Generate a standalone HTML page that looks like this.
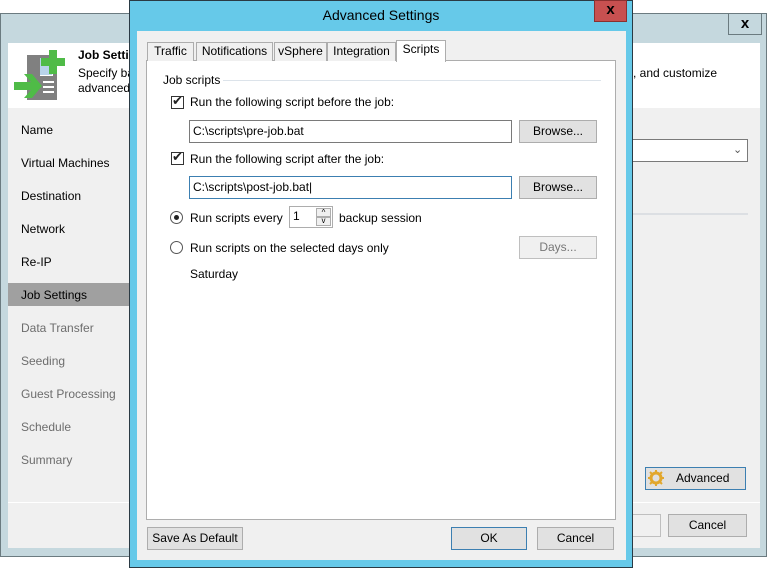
<!DOCTYPE html>
<html><head><style>
*{box-sizing:border-box;margin:0;padding:0}
body{width:768px;height:568px;background:#fff;position:relative;overflow:hidden;font-family:"Liberation Sans","DejaVu Sans",sans-serif;font-size:12px;color:#000}
.a{position:absolute}
.btn{position:absolute;background:#e1e1e1;border:1px solid #adadad;text-align:center;line-height:20px;font-size:12px}
.nav{position:absolute;left:21px;font-size:12px}
.cb{position:absolute;width:13px;height:13px;border:1px solid #333;background:#fff}
.tb{position:absolute;background:#fff;border:1px solid #7a7a7a;padding-left:3px;line-height:20px}
.tab{position:absolute;top:42px;height:19px;border:1px solid #adadad;border-bottom:none;background:#f0f0f0;line-height:17px;text-align:center;font-size:12px}
.rad{position:absolute;width:13px;height:13px;border:1px solid #555;border-radius:50%;background:#fff}
</style></head><body>
<!-- background window -->
<div class="a" style="left:0;top:13px;width:767px;height:544px;background:#c5d8de;border:1px solid #6b7b80"></div>
<div class="a" style="left:728px;top:13px;width:34px;height:22px;border:1px solid #6b7b80;background:#c5d8de;text-align:center;font-weight:bold;font-size:15px;line-height:20px">x</div>
<div class="a" style="left:8px;top:43px;width:752px;height:505px;background:#f0f0f0"></div>
<div class="a" style="left:8px;top:43px;width:752px;height:65px;background:#fff"></div>
<svg class="a" style="left:12px;top:48px" width="56" height="56" viewBox="0 0 56 56">
<rect x="15" y="7" width="30" height="45" fill="#808080"/>
<rect x="28" y="10" width="13" height="18" fill="#fff"/>
<rect x="28" y="10" width="12" height="17" fill="#b8d3ea"/>
<rect x="31" y="33" width="11" height="2" fill="#fff"/><rect x="31" y="38" width="11" height="2" fill="#fff"/><rect x="31" y="43" width="11" height="2" fill="#fff"/>
<path d="M37 2h8v8h8v8h-8v8h-8v-8h-8v-8h8z" fill="#4fbb47"/>
<path d="M2 34h17l-7-8h8l10 12-10 12h-8l7-8H2z" fill="#4fbb47"/>
</svg>
<div class="a" style="left:78px;top:48px;font-weight:bold">Job Settings</div>
<div class="a" style="left:78px;top:66px;line-height:15px">Specify basic<br>advanced</div>
<div class="a" style="left:633px;top:66px">, and customize</div>
<div class="nav" style="top:123px">Name</div>
<div class="nav" style="top:156px">Virtual Machines</div>
<div class="nav" style="top:189px">Destination</div>
<div class="nav" style="top:222px">Network</div>
<div class="nav" style="top:255px">Re-IP</div>
<div class="a" style="left:8px;top:283px;width:124px;height:23px;background:#a0a0a0"></div>
<div class="nav" style="top:288px">Job Settings</div>
<div class="nav" style="top:321px;color:#6d6d6d">Data Transfer</div>
<div class="nav" style="top:354px;color:#6d6d6d">Seeding</div>
<div class="nav" style="top:387px;color:#6d6d6d">Guest Processing</div>
<div class="nav" style="top:420px;color:#6d6d6d">Schedule</div>
<div class="nav" style="top:453px;color:#6d6d6d">Summary</div>
<div class="a" style="left:8px;top:502px;width:752px;height:1px;background:#fff"></div>
<div class="a" style="left:630px;top:139px;width:118px;height:23px;background:#fff;border:1px solid #7a7a7a"></div>
<div class="a" style="left:733px;top:143px;color:#555;font-size:11px">⌄</div>
<div class="a" style="left:633px;top:213px;width:115px;height:2px;background:#dcdfe3"></div>
<div class="btn" style="left:645px;top:467px;width:101px;height:23px;border-color:#3c7fb1;text-align:left;padding-left:30px">Advanced</div>
<svg class="a" style="left:648px;top:470px" width="16" height="16" viewBox="0 0 16 16"><circle cx="8" cy="8" r="5" fill="none" stroke="#e2a72c" stroke-width="3"/><path d="M8 0v3M8 13v3M0 8h3M13 8h3M2 2l2 2M12 12l2 2M2 14l2-2M12 4l2-2" stroke="#e2a72c" stroke-width="2"/></svg>
<div class="btn" style="left:620px;top:514px;width:41px;height:23px;background:#f0f0f0;border-color:#bfbfbf"></div>
<div class="btn" style="left:668px;top:514px;width:79px;height:23px">Cancel</div>

<!-- front dialog -->
<div class="a" style="left:129px;top:0;width:504px;height:568px;background:#66c9e9;border:1px solid #2a3a44"></div>
<div class="a" style="left:129px;top:7px;width:504px;text-align:center;font-size:14px">Advanced Settings</div>
<div class="a" style="left:594px;top:0;width:33px;height:22px;background:#c75050;border:1px solid #8a3030;text-align:center;font-weight:bold;font-size:15px;line-height:18px">x</div>
<div class="a" style="left:137px;top:31px;width:489px;height:529px;background:#f0f0f0"></div>
<div class="a" style="left:146px;top:60px;width:470px;height:460px;background:#fff;border:1px solid #adadad"></div>
<div class="tab" style="left:147px;width:47px">Traffic</div>
<div class="tab" style="left:196px;width:77px">Notifications</div>
<div class="tab" style="left:274px;width:53px">vSphere</div>
<div class="tab" style="left:327px;width:69px">Integration</div>
<div class="tab" style="left:396px;top:40px;height:22px;width:50px;background:#fff">Scripts</div>
<div class="a" style="left:163px;top:73px">Job scripts</div>
<div class="a" style="left:223px;top:80px;width:378px;height:1px;background:#dce3ea"></div>
<div class="cb" style="left:171px;top:96px"></div><div class="a" style="left:172px;top:93px;font-size:13px;font-weight:bold;color:#222">✔</div>
<div class="a" style="left:190px;top:95px">Run the following script before the job:</div>
<div class="tb" style="left:189px;top:120px;width:323px;height:23px">C:\scripts\pre-job.bat</div>
<div class="btn" style="left:519px;top:120px;width:78px;height:23px">Browse...</div>
<div class="cb" style="left:171px;top:152px"></div><div class="a" style="left:172px;top:149px;font-size:13px;font-weight:bold;color:#222">✔</div>
<div class="a" style="left:190px;top:152px">Run the following script after the job:</div>
<div class="tb" style="left:189px;top:176px;width:323px;height:23px;border-color:#3c7fb1">C:\scripts\post-job.bat|</div>
<div class="btn" style="left:519px;top:176px;width:78px;height:23px">Browse...</div>
<div class="rad" style="left:170px;top:211px"></div><div class="a" style="left:174px;top:215px;width:5px;height:5px;border-radius:50%;background:#222"></div>
<div class="a" style="left:190px;top:211px">Run scripts every</div>
<div class="a" style="left:289px;top:206px;width:44px;height:22px;background:#fff;border:1px solid #adadad;padding-left:3px;line-height:18px">1</div>
<div class="a" style="left:316px;top:208px;width:15px;height:9px;border:1px solid #adadad;background:#f0f0f0;font-size:8px;text-align:center;line-height:8px">^</div>
<div class="a" style="left:316px;top:217px;width:15px;height:9px;border:1px solid #adadad;background:#f0f0f0;font-size:8px;text-align:center;line-height:6px">v</div>
<div class="a" style="left:339px;top:211px">backup session</div>
<div class="rad" style="left:170px;top:241px"></div>
<div class="a" style="left:190px;top:241px">Run scripts on the selected days only</div>
<div class="btn" style="left:519px;top:236px;width:78px;height:23px;background:#f0f0f0;border-color:#bfbfbf;color:#777">Days...</div>
<div class="a" style="left:190px;top:267px">Saturday</div>
<div class="btn" style="left:147px;top:527px;width:96px;height:23px">Save As Default</div>
<div class="btn" style="left:451px;top:527px;width:76px;height:23px;border-color:#3c7fb1">OK</div>
<div class="btn" style="left:537px;top:527px;width:77px;height:23px">Cancel</div>
</body></html>
